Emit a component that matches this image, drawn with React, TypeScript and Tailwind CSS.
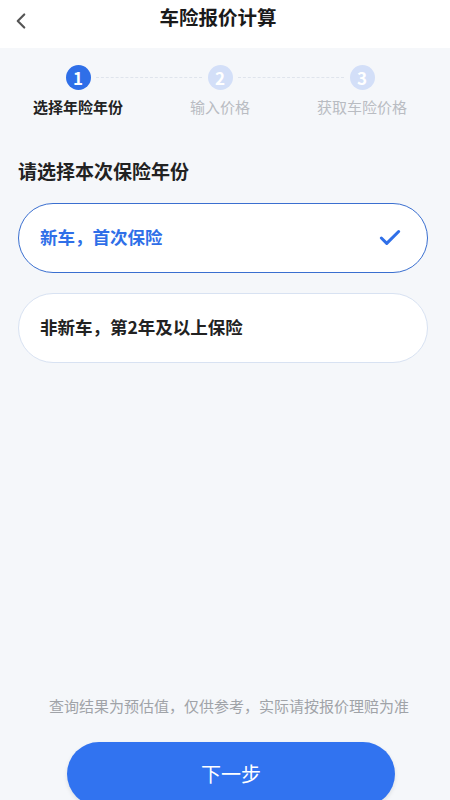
import { ChevronLeft, Check } from "lucide-react";

const steps = [
  { n: 1, label: "选择年险年份", active: true },
  { n: 2, label: "输入价格", active: false },
  { n: 3, label: "获取车险价格", active: false },
];

const options = [
  { text: "新车，首次保险", selected: true },
  { text: "非新车，第2年及以上保险", selected: false },
];

export default function App() {
  return (
    <div
      className="flex flex-col h-[800px] overflow-hidden bg-[#f5f7fa]"
      style={{ fontFamily: '"Noto Sans CJK SC", "Noto Sans", sans-serif' }}
    >
      <header className="relative h-[48px] shrink-0 bg-white flex items-center justify-center">
        <button className="absolute left-[8px] top-[8px] text-[#555]">
          <ChevronLeft size={26} strokeWidth={2} />
        </button>
        <h1 className="text-[19.5px] font-bold text-[#1a1a1a] -mt-[14px] -ml-[14px]">车险报价计算</h1>
      </header>

      <div className="flex items-start pt-[17px] pl-[7px] pr-[17px]">
        {steps.map((s, i) => (
          <div key={s.n} className="relative flex-1 flex flex-col items-center">
            {i > 0 && (
              <div className="absolute top-[12px] right-1/2 w-full px-[18px]">
                <div className="border-t border-dashed border-[#dfe4ec]" />
              </div>
            )}
            <div
              className={`relative z-10 w-[25px] h-[25px] rounded-full flex items-center justify-center text-[17px] font-bold text-white leading-none ${
                s.active ? "bg-[#2f6fe8]" : "bg-[#d3dff8]"
              }`}
            >
              {s.n}
            </div>
            <div
              className={`mt-[6px] text-[15px] ${
                s.active ? "text-[#222] font-semibold" : "text-[#b9bcc2]"
              }`}
            >
              {s.label}
            </div>
          </div>
        ))}
      </div>

      <div className="pl-[18px] pr-[22px] pt-[38px]">
        <h2 className="text-[19px] font-semibold text-[#222] leading-[28px]">请选择本次保险年份</h2>
        <div className="mt-[18px] flex flex-col gap-[20px]">
          {options.map((o) => (
            <div
              key={o.text}
              className={`h-[70px] rounded-full bg-white flex items-center justify-between pl-[21px] pr-[24px] ${
                o.selected ? "border-[1.5px] border-[#3a6fd0]" : "border border-[#d8e2f2]"
              }`}
            >
              <span
                className={`text-[17.5px] font-semibold ${
                  o.selected ? "text-[#2f6fe8]" : "text-[#222]"
                }`}
              >
                {o.text}
              </span>
              {o.selected && <Check size={26} strokeWidth={2.8} className="text-[#2f6fe8]" />}
            </div>
          ))}
        </div>
      </div>

      <div className="flex-1" />

      <p className="text-center text-[15px] text-[#a0a3a8] leading-[20px] pl-[8px]">
        查询结果为预估值，仅供参考，实际请按报价理赔为准
      </p>
      <div className="pl-[67px] pr-[55px] pt-[26px] -mb-[6px]">
        <button className="w-full h-[64px] rounded-full bg-[#3173f0] text-white text-[20px] shadow-[0_2px_4px_rgba(0,0,0,0.1)]">
          下一步
        </button>
      </div>
    </div>
  );
}
